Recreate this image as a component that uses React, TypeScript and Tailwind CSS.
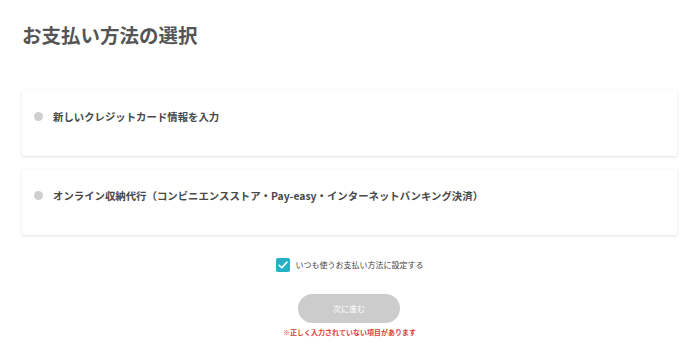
import React, { useState } from 'react';

const methods = [
  { id: 'card', label: '新しいクレジットカード情報を入力' },
  { id: 'online', label: 'オンライン収納代行（コンビニエンスストア・Pay-easy・インターネットバンキング決済）' },
];

const App: React.FC = () => {
  const [selected, setSelected] = useState<string | null>(null);
  const [useDefault, setUseDefault] = useState(true);

  return (
    <div
      className="min-h-[357px] w-full bg-white px-[22px] text-[#444]"
      style={{ fontFamily: '"Noto Sans CJK JP", "Noto Sans", sans-serif' }}
    >
      <h1 className="pt-[23px] text-[19.5px] font-bold leading-[24px] text-[#555]">お支払い方法の選択</h1>

      <div className="mt-[43px] flex flex-col gap-[13px]">
        {methods.map((m) => (
          <button
            key={m.id}
            onClick={() => setSelected(m.id)}
            className="flex h-[66px] w-full items-start rounded-[2px] bg-white px-[12px] pt-[19px] text-left shadow-[0_1px_3px_rgba(0,0,0,0.13)]"
          >
            <span
              className={`mt-[3px] h-[9px] w-[9px] shrink-0 rounded-full ${selected === m.id ? 'bg-[#1fb0c2]' : 'bg-[#cfcfcf]'}`}
            />
            <span className="ml-[10px] text-[10.4px] font-bold leading-[15px] text-[#484848]">{m.label}</span>
          </button>
        ))}
      </div>

      <div className="mt-[23px] flex items-center justify-center">
        <button
          onClick={() => setUseDefault(!useDefault)}
          className={`flex h-[14px] w-[14px] items-center justify-center rounded-[2px] ${useDefault ? 'bg-[#22b2c3]' : 'border border-gray-300 bg-white'}`}
        >
          {useDefault && (
            <svg viewBox="0 0 14 14" className="h-[12px] w-[12px]" fill="none">
              <path d="M2.5 7.3 L5.6 10.2 L11.6 3.6" stroke="white" strokeWidth="1.9" strokeLinecap="round" strokeLinejoin="round" />
            </svg>
          )}
        </button>
        <span className="ml-[6px] text-[8px] leading-[12px] text-[#444]">いつも使うお支払い方法に設定する</span>
      </div>

      <div className="mt-[22px] flex flex-col items-center">
        <button
          disabled
          className="ml-[-1px] h-[29px] w-[102px] rounded-full bg-[#cccccc] text-[8px] text-white"
        >
          次に進む
        </button>
        <p className="mt-[4px] text-[7px] font-bold leading-[10px] text-[#e03a3a]">※正しく入力されていない項目があります</p>
      </div>
    </div>
  );
};

export default App;
